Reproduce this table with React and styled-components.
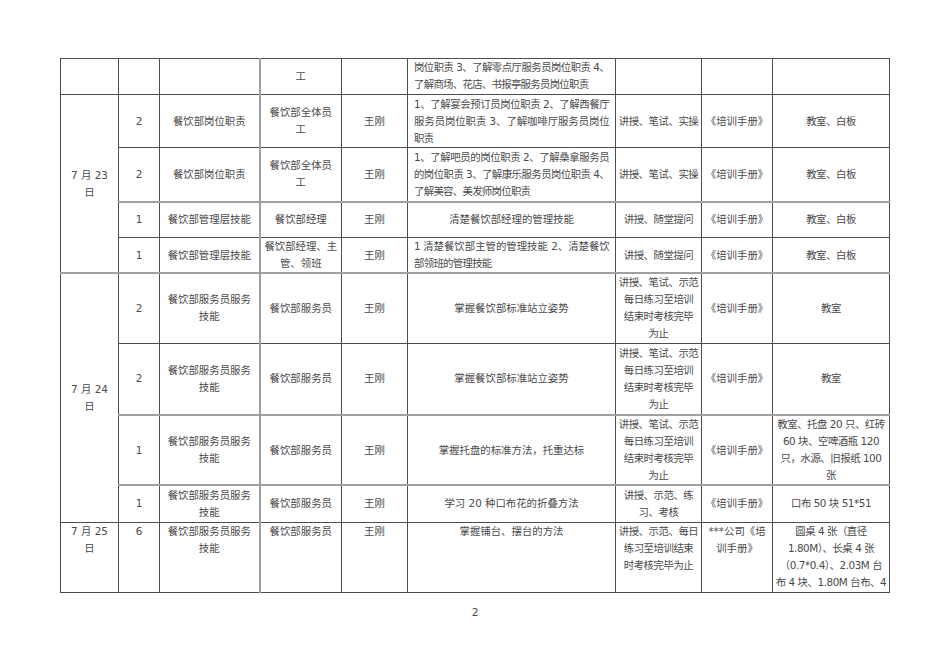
import React from "react";
import styled, { createGlobalStyle } from "styled-components";

const GlobalStyle = createGlobalStyle`
  html, body {
    margin: 0;
    padding: 0;
    background: #ffffff;
  }
  body {
    font-family: "DejaVu Sans", "Noto Sans CJK SC", sans-serif;
    color: #4a4a4a;
  }
`;

const Page = styled.div`
  width: 950px;
  height: 672px;
  box-sizing: border-box;
  padding: 58px 0 0 60px;
  background: #ffffff;
  overflow: hidden;
`;

const Table = styled.table`
  border-collapse: collapse;
  table-layout: fixed;
  width: 830px;
  font-size: 10.4px;
  line-height: 17px;
`;

const Row = styled.tr`
  height: ${(p) => p.$h}px;
  ${(p) => p.$thick && "& > td { border-top: 2px solid #a0a0a0; }"}
`;

const Cell = styled.td`
  border: 1px solid #4d4d4d;
  padding: ${(p) => (p.$wide ? "0 6px" : "0 2px")};
  vertical-align: ${(p) => (p.$top ? "top" : "middle")};
  text-align: ${(p) => p.$align || "center"};
  letter-spacing: ${(p) => (p.$squeeze ? `-${p.$squeeze}px` : "0")};
  overflow: hidden;
  ${(p) => p.$split && "border-left: 2px solid #a0a0a0;"}
`;

const Line = styled.span`
  display: block;
  white-space: nowrap;
  text-align-last: ${(p) => (p.$fill ? "justify" : "auto")};
`;

const Footer = styled.div`
  width: 830px;
  margin-top: 11px;
  text-align: center;
  font-size: 10.5px;
  line-height: 17px;
`;

const widths = [58, 41, 100, 82, 66, 208, 86, 71, 117];

const manual = ["《培训手册》"];
const drill = ["讲授、笔试、示范", "每日练习至培训", "结束时考核完毕", "为止"];
const skill = ["餐饮部服务员服务", "技能"];

const rows = [
  {
    h: 36,
    date: { lines: [], span: 1 },
    num: "",
    course: [],
    target: ["工"],
    desc: ["岗位职责 3、了解零点厅服务员岗位职责 4、", "了解商场、花店、书报亭服务员岗位职责"],
    fill: true,
    method: [],
    material: [],
    place: [],
  },
  {
    h: 53,
    date: { lines: ["7 月 23", "日"], span: 4 },
    num: "2",
    course: ["餐饮部岗位职责"],
    target: ["餐饮部全体员", "工"],
    desc: [
      "1、了解宴会预订员岗位职责 2、了解西餐厅",
      "服务员岗位职责 3、了解咖啡厅服务员岗位",
      "职责",
    ],
    fill: true,
    method: ["讲授、笔试、实操"],
    material: manual,
    place: ["教室、白板"],
  },
  {
    h: 54,
    num: "2",
    course: ["餐饮部岗位职责"],
    target: ["餐饮部全体员", "工"],
    desc: [
      "1、了解吧员的岗位职责 2、了解桑拿服务员",
      "的岗位职责 3、了解康乐服务员岗位职责 4、",
      "了解美容、美发师岗位职责",
    ],
    fill: true,
    method: ["讲授、笔试、实操"],
    material: manual,
    place: ["教室、白板"],
  },
  {
    h: 36,
    thick: true,
    num: "1",
    course: ["餐饮部管理层技能"],
    target: ["餐饮部经理"],
    desc: ["清楚餐饮部经理的管理技能"],
    method: ["讲授、随堂提问"],
    material: manual,
    place: ["教室、白板"],
  },
  {
    h: 35,
    num: "1",
    course: ["餐饮部管理层技能"],
    target: ["餐饮部经理、主", "管、领班"],
    desc: ["1 清楚餐饮部主管的管理技能 2、清楚餐饮", "部领班的管理技能"],
    fill: true,
    method: ["讲授、随堂提问"],
    material: manual,
    place: ["教室、白板"],
  },
  {
    h: 70,
    thick: true,
    date: { lines: ["7 月 24", "日"], span: 4 },
    num: "2",
    course: skill,
    target: ["餐饮部服务员"],
    desc: ["掌握餐饮部标准站立姿势"],
    method: drill,
    material: manual,
    place: ["教室"],
  },
  {
    h: 72,
    num: "2",
    course: skill,
    target: ["餐饮部服务员"],
    desc: ["掌握餐饮部标准站立姿势"],
    method: drill,
    material: manual,
    place: ["教室"],
  },
  {
    h: 70,
    thick: true,
    num: "1",
    course: skill,
    target: ["餐饮部服务员"],
    desc: ["掌握托盘的标准方法，托重达标"],
    method: drill,
    material: manual,
    place: ["教室、托盘 20 只、红砖", "60 块、空啤酒瓶 120", "只，水源、旧报纸 100", "张"],
  },
  {
    h: 37,
    thick: true,
    num: "1",
    course: skill,
    target: ["餐饮部服务员"],
    desc: ["学习 20 种口布花的折叠方法"],
    method: ["讲授、示范、练", "习、考核"],
    material: manual,
    place: ["口布 50 块 51*51"],
  },
  {
    h: 70,
    top: true,
    date: { lines: ["7 月 25", "日"], span: 1 },
    num: "6",
    course: skill,
    target: ["餐饮部服务员"],
    desc: ["掌握铺台、摆台的方法"],
    method: ["讲授、示范、每日", "练习至培训结束", "时考核完毕为止"],
    material: ["***公司《培", "训手册》"],
    place: ["圆桌 4 张（直径", "1.80M）、长桌 4 张", "（0.7*0.4）、2.03M 台", "布 4 块、1.80M 台布、4"],
  },
];

const renderLines = (lines, fill) =>
  lines.map((text, k) => (
    <Line key={k} $fill={fill && k < lines.length - 1}>
      {text}
    </Line>
  ));

const App = () => {
  return (
    <Page lang="zh-CN">
      <GlobalStyle />
      <Table>
        <colgroup>
          {widths.map((w, i) => (
            <col key={i} style={{ width: w }} />
          ))}
        </colgroup>
        <tbody>
          {rows.map((r, i) => (
            <Row key={i} $h={r.h} $thick={r.thick}>
              {r.date && (
                <Cell rowSpan={r.date.span} $top={r.top}>
                  {renderLines(r.date.lines)}
                </Cell>
              )}
              <Cell $top={r.top}>{r.num}</Cell>
              <Cell $top={r.top}>{renderLines(r.course)}</Cell>
              <Cell $top={r.top} $split>
                {renderLines(r.target)}
              </Cell>
              <Cell $top={r.top}>{r.num ? "王刚" : ""}</Cell>
              <Cell
                $top={r.top || i === 0}
                $align={r.fill ? "left" : "center"}
                $wide={r.fill}
                $squeeze={r.fill ? 0.7 : 0}
              >
                {renderLines(r.desc, r.fill)}
              </Cell>
              <Cell $top={r.top} $squeeze={0.45}>
                {renderLines(r.method)}
              </Cell>
              <Cell $top={r.top}>{renderLines(r.material)}</Cell>
              <Cell $top={r.top} $squeeze={0.45}>
                {renderLines(r.place)}
              </Cell>
            </Row>
          ))}
        </tbody>
      </Table>
      <Footer>2</Footer>
    </Page>
  );
};

export default App;
